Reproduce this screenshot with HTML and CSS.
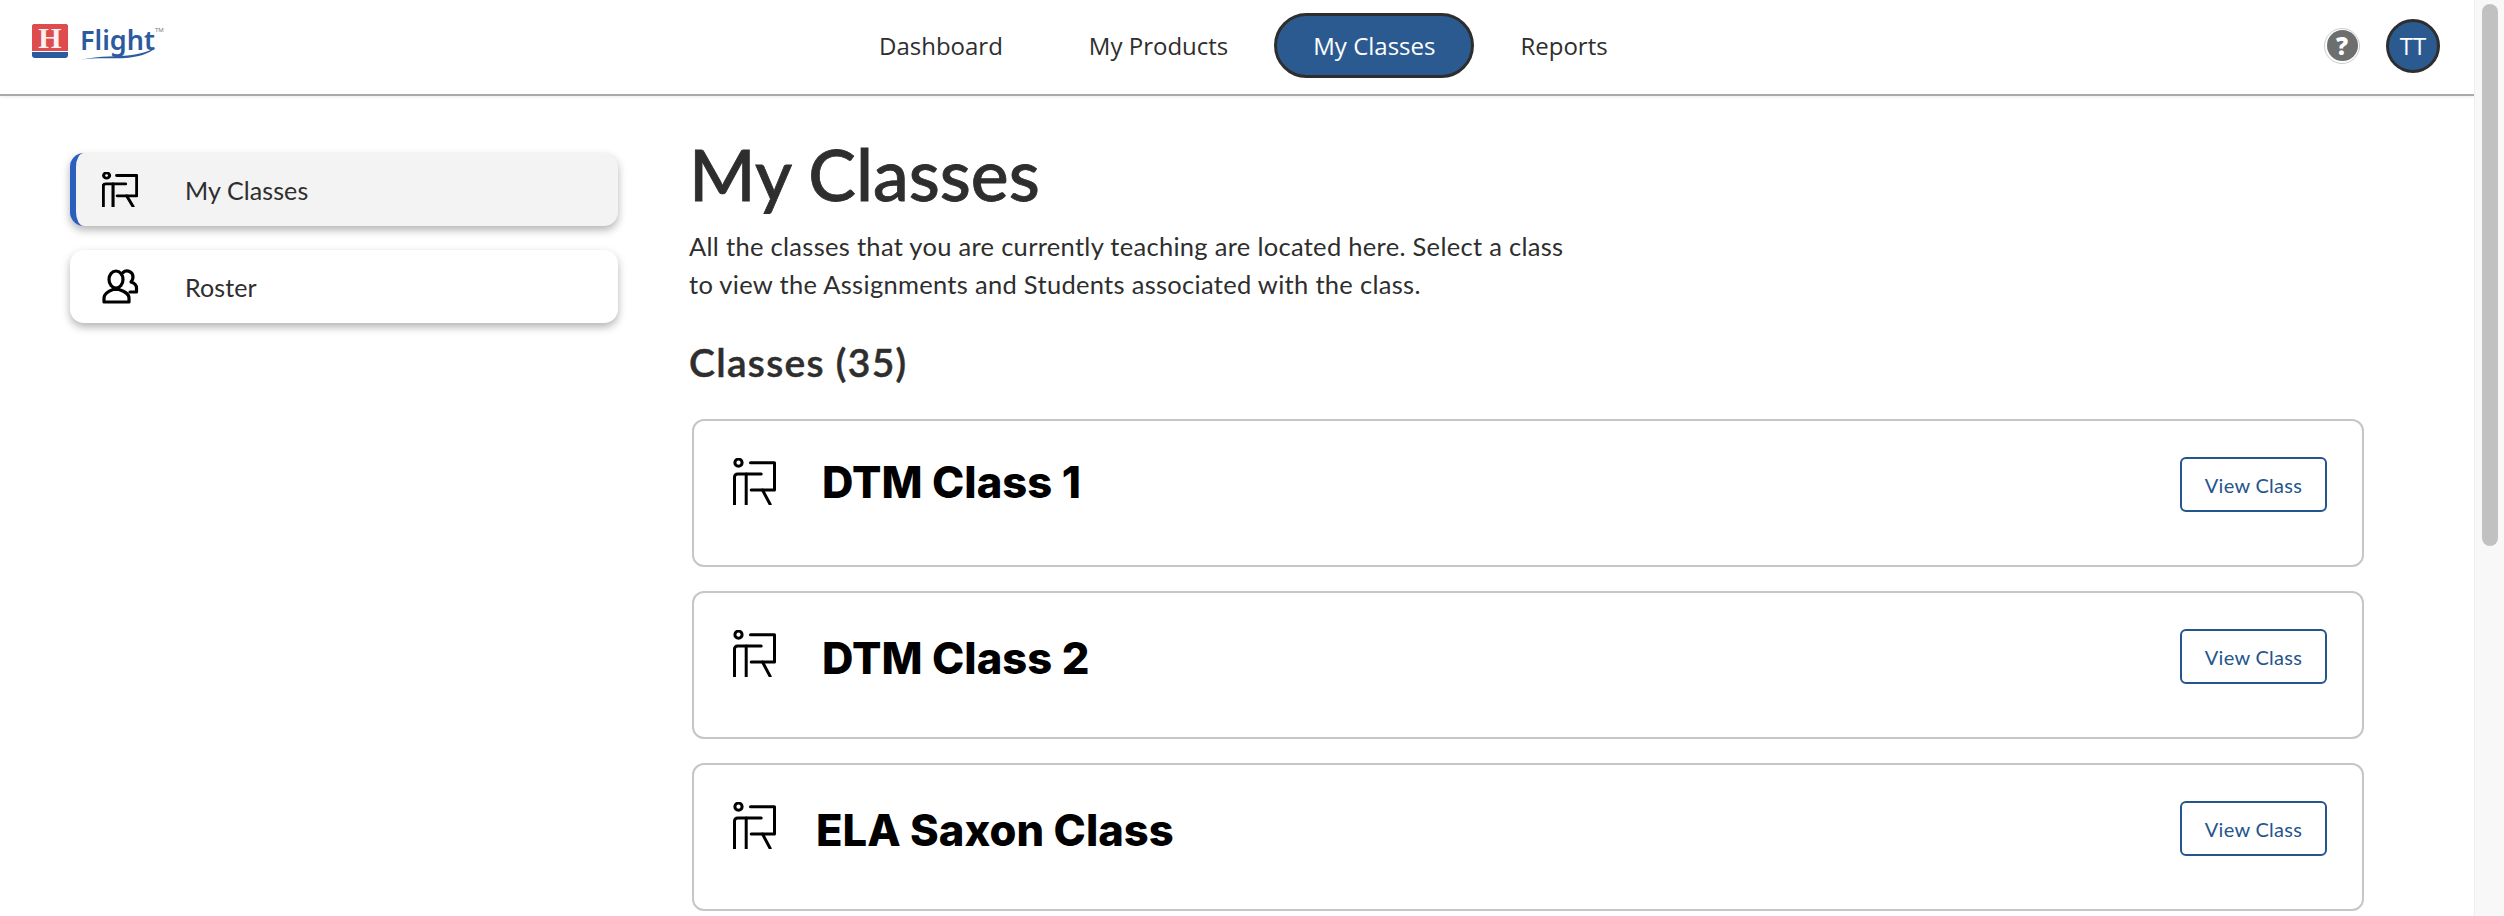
FILE: index.html
```html
<!DOCTYPE html>
<html lang="en">
<head>
    <meta charset="UTF-8">
    <meta name="viewport" content="width=device-width, initial-scale=1.0">
    <title>My Classes</title>
    <link rel="stylesheet" href="styles.css">
</head>
<body>
    <svg class="sprites" width="0" height="0">
        <symbol id="teacher" viewBox="1.5 2 43 47" preserveAspectRatio="none">
            <circle cx="7" cy="6.7" r="3.6"/>
            <path d="M3 48.5V21a3 3 0 0 1 3-3H29.7"/>
            <path d="M14.7 18V48.5"/>
            <path d="M19 6.7H43V34H19.7"/>
            <path d="M31 34L38.7 48.5"/>
        </symbol>
    </svg>
    <div class="app">
        <header class="topbar">
            <a class="logo" href="#">
                <span class="logo-mark"><span class="logo-h">H</span></span>
                <span class="logo-word">
                    Flight<sup class="logo-tm">TM</sup>
                    <svg class="logo-swoosh" viewBox="0 0 76 12"><path d="M0 12C20 7 40 9 52 7S68 3 76 0C68 6 58 9 46 10S16 9 0 12z"/></svg>
                </span>
            </a>
            <nav class="main-nav">
                <a href="#" class="nav-item">Dashboard</a>
                <a href="#" class="nav-item">My Products</a>
                <a href="#" class="nav-item active">My Classes</a>
                <a href="#" class="nav-item">Reports</a>
            </nav>
            <div class="user-tools">
                <span class="help"><span class="help-dot">?</span></span>
                <span class="avatar">TT</span>
            </div>
        </header>
        <div class="page">
            <aside class="sidebar">
                <a href="#" class="side-item current">
                    <svg class="side-icon teacher-icon"><use href="#teacher"/></svg>
                    <span>My Classes</span>
                </a>
                <a href="#" class="side-item">
                    <svg class="side-icon" viewBox="0 0 36 35">
                        <ellipse cx="14" cy="10.5" rx="7" ry="8.5"/>
                        <path d="M2 33V29C2 24 7 22 11 20.5H17C21 22 27 24 27 29V33Z"/>
                        <path d="M21 3.5A6 6 0 0 1 31 8C31 10 30 12 29 13C32 14 34.5 16 34.5 19V23H28"/>
                    </svg>
                    <span>Roster</span>
                </a>
            </aside>
            <main class="content">
                <h1>My Classes</h1>
                <p class="intro">All the classes that you are currently teaching are located here. Select a class<br>to view the Assignments and Students associated with the class.</p>
                <h2>Classes (35)</h2>
                <div class="class-list">
                    <section class="class-card">
                        <svg class="class-icon"><use href="#teacher"/></svg>
                        <h3 class="raised">DTM Class 1</h3>
                        <button class="view-btn">View Class</button>
                    </section>
                    <section class="class-card">
                        <svg class="class-icon"><use href="#teacher"/></svg>
                        <h3>DTM Class 2</h3>
                        <button class="view-btn">View Class</button>
                    </section>
                    <section class="class-card">
                        <svg class="class-icon"><use href="#teacher"/></svg>
                        <h3 class="tight">ELA Saxon Class</h3>
                        <button class="view-btn">View Class</button>
                    </section>
                </div>
            </main>
        </div>
    </div>
    <div class="scrollbar"><div class="scroll-thumb"></div></div>
</body>
</html>
```

FILE: styles.css
```css
body {
    margin: 0;
    height: 916px;
    overflow: hidden;
    display: flex;
    background-color: #fff;
    font-family: Lato, sans-serif;
    color: #2e2e2e;
}
a {
    color: inherit;
    text-decoration: none;
}
.sprites {
    position: absolute;
}
symbol {
    fill: none;
    stroke: currentColor;
    stroke-linecap: round;
    stroke-linejoin: round;
}
.app {
    flex: 1;
    min-width: 0;
}
.scrollbar {
    width: 30px;
    box-sizing: border-box;
    padding: 4px 6px 0 7px;
    background-color: #f8f8f8;
    border-left: 1px solid #eee;
}
.scroll-thumb {
    width: 16px;
    height: 542px;
    background-color: #c1c1c1;
    border-radius: 8px;
}

.topbar {
    display: flex;
    align-items: center;
    height: 94px;
    border-bottom: 2px solid #a9a9a9;
    box-shadow: 0 1px 3px rgba(0, 0, 0, 0.08);
    padding: 0 34px 0 32px;
}
.logo {
    display: flex;
    align-items: flex-start;
    gap: 12px;
    width: 807px;
    height: 94px;
    padding-top: 24px;
    box-sizing: border-box;
}
.logo-mark {
    display: block;
    width: 36px;
    height: 34px;
    background-color: #2b5a9e;
    border-radius: 3px;
}
.logo-h {
    display: block;
    height: 28px;
    box-sizing: border-box;
    background-color: #de4c4d;
    border-bottom: 1px solid #fff;
    border-radius: 3px 3px 0 0;
    font-family: "Liberation Serif", serif;
    font-weight: 700;
    font-size: 30px;
    line-height: 27px;
    text-align: center;
    color: #fdf0f0;
}
.logo-word {
    position: relative;
    font-family: "Noto Sans", sans-serif;
    font-size: 27px;
    line-height: 32px;
    font-weight: 600;
    color: #2b5a9e;
}
.logo-tm {
    font-size: 6px;
    font-weight: 400;
    vertical-align: 18px;
    line-height: 0;
    color: #777;
}
.logo-swoosh {
    position: absolute;
    left: 0;
    top: 24px;
    width: 76px;
    height: 12px;
    fill: #2b5a9e;
}

.main-nav {
    display: flex;
    align-items: center;
    gap: 6px;
    margin-top: -4px;
    font-family: "Open Sans", sans-serif;
    font-size: 24px;
}
.nav-item {
    padding: 0 40px;
    height: 65px;
    line-height: 65px;
    box-sizing: border-box;
}
.nav-item.active {
    background-color: #2b5a91;
    color: #fff;
    border: 3px solid #2e2e2e;
    border-radius: 33px;
    line-height: 59px;
    padding: 0 36px;
}
.user-tools {
    display: flex;
    align-items: center;
    gap: 26px;
    margin-left: auto;
    margin-top: -3px;
}
.help {
    display: flex;
    align-items: center;
    justify-content: center;
    width: 36px;
    height: 36px;
    border: 1px solid #ccc;
    border-radius: 50%;
    box-sizing: border-box;
}
.help-dot {
    width: 31px;
    height: 31px;
    border-radius: 50%;
    background-color: #6d6e6e;
    color: #fff;
    font-family: "Open Sans", sans-serif;
    font-weight: 800;
    font-size: 24px;
    line-height: 31px;
    text-align: center;
}
.avatar {
    width: 54px;
    height: 54px;
    border: 3px solid #2e2e2e;
    border-radius: 50%;
    box-sizing: border-box;
    background-color: #2b5a91;
    color: #fff;
    font-family: "Open Sans", sans-serif;
    font-size: 24px;
    line-height: 48px;
    text-align: center;
}

.page {
    display: flex;
    padding: 57px 0 0 70px;
}
.sidebar {
    display: flex;
    flex-direction: column;
    gap: 24px;
    width: 548px;
    flex-shrink: 0;
}
.side-item {
    display: flex;
    align-items: center;
    gap: 47px;
    height: 73px;
    padding-left: 32px;
    box-sizing: border-box;
    background-color: #fff;
    border-radius: 14px;
    box-shadow: 0 4px 8px rgba(0, 0, 0, 0.3);
    font-size: 25px;
    letter-spacing: 0.1px;
}
.side-item.current {
    background-color: #f3f3f3;
    border-left: 6px solid #2a5fbd;
    padding-left: 26px;
}
.side-icon {
    width: 36px;
    height: 35px;
    fill: none;
    stroke: #000;
    color: #000;
    stroke-width: 3.2;
    stroke-linecap: round;
    stroke-linejoin: round;
    flex-shrink: 0;
    overflow: visible;
}
.teacher-icon {
    stroke-width: 3.7;
}
.content {
    flex: 1;
    margin-left: 71px;
    margin-right: 110px;
    margin-top: -30px;
}
h1 {
    margin: 0;
    font-size: 71.5px;
    font-weight: 500;
    line-height: 100px;
    -webkit-text-stroke: 0.8px #2e2e2e;
}
.intro {
    margin: 4px 0 0;
    font-size: 25.5px;
    letter-spacing: 0.3px;
    line-height: 38px;
}
h2 {
    margin: 34px 0 0;
    font-size: 39px;
    font-weight: 600;
    letter-spacing: 1.3px;
    line-height: 50px;
    -webkit-text-stroke: 0.5px #2e2e2e;
}
.class-list {
    display: flex;
    flex-direction: column;
    gap: 24px;
    margin-top: 32px;
}
.class-card {
    display: flex;
    align-items: flex-start;
    height: 148px;
    margin-left: 3px;
    padding: 36px 35px 0 39px;
    box-sizing: border-box;
    border: 2px solid #c3c7ca;
    border-radius: 12px;
}
.class-icon {
    width: 43px;
    height: 47px;
    margin-top: 1px;
    color: #000;
    stroke-width: 3;
    flex-shrink: 0;
}
h3 {
    margin: 1px 0 0 46px;
    font-family: Inter, sans-serif;
    font-size: 43.5px;
    font-weight: 800;
    line-height: 56px;
    color: #000;
}
h3.raised {
    margin-top: -3px;
}
h3.tight {
    margin-left: 40px;
}
.view-btn {
    margin-left: auto;
    width: 147px;
    height: 55px;
    background-color: #fff;
    border: 2px solid #24558c;
    border-radius: 6px;
    color: #24558c;
    font-family: Lato, sans-serif;
    font-size: 20px;
    letter-spacing: 0.3px;
}
```
